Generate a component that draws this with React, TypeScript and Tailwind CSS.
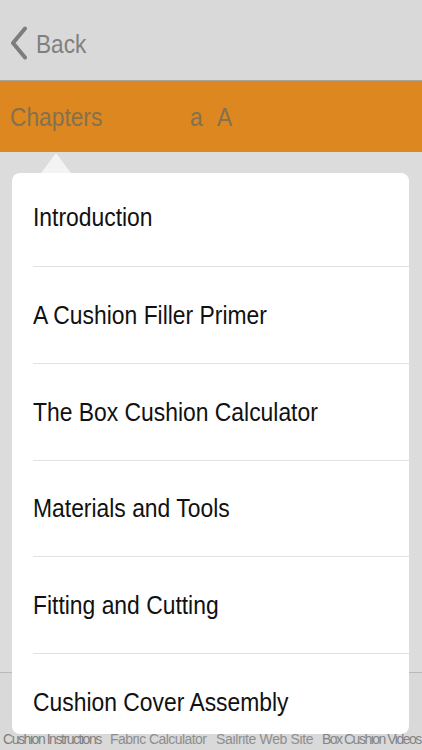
const chapters = [
  { title: "Introduction", row: "h-[94px] border-b pb-[5px]" },
  { title: "A Cushion Filler Primer", row: "h-[97px] border-b" },
  { title: "The Box Cushion Calculator", row: "h-[97px] border-b" },
  { title: "Materials and Tools", row: "h-[96px] border-b" },
  { title: "Fitting and Cutting", row: "h-[97px] border-b pt-[1px]" },
  { title: "Cushion Cover Assembly", row: "h-[97px] pb-[1px]" },
];

export default function App() {
  return (
    <div className="relative flex h-[750px] w-[422px] flex-col overflow-hidden bg-[#dcdcdc] font-['Liberation_Sans',Arial,sans-serif]">
      <header className="flex h-[81px] shrink-0 items-center gap-[9px] border-b border-[#a8a29a] bg-[#d9d9d9] pl-[10px]">
        <svg width="17" height="34" viewBox="0 0 17 34" fill="none" className="mt-[6px]">
          <path d="M15 2.5 L3 17 L15 31.5" stroke="#7d7d7d" strokeWidth="4" strokeLinecap="round" strokeLinejoin="round" />
        </svg>
        <span className="mt-[7px] inline-block origin-left scale-x-[0.87] text-[26px] leading-none text-[#808080]">Back</span>
      </header>

      <div className="flex h-[71px] shrink-0 items-center bg-[#dd8720] pl-[10px] text-[26px] leading-none text-[#83714f]">
        <span className="w-[180px] origin-left scale-x-[0.875]">Chapters</span>
        <span className="w-[27px] origin-left scale-x-[0.875]">a</span>
        <span className="origin-left scale-x-[0.875]">A</span>
      </div>

      <div className="flex-1 border-b border-[#b9b9b9]" />

      <div className="grid h-[77px] shrink-0 grid-cols-[98px_97px_97px_97px] items-end gap-x-[9px] bg-[#d9d9d9] pb-[1px] pl-[3px] text-[14px] leading-[20px] text-[#8e8e8e] whitespace-nowrap">
        <span className="tracking-[-1.45px] text-[#7f7f7f]">Cushion Instructions</span>
        <span className="tracking-[-0.55px]">Fabric Calculator</span>
        <span className="tracking-[-0.35px]">Sailrite Web Site</span>
        <span className="tracking-[-1.5px] text-[#858585]">Box Cushion Videos</span>
      </div>

      {/* popover over the dimmed page */}
      <div className="absolute left-[12px] top-[173px] h-[561px] w-[397px] rounded-[8px] bg-white pl-[21px]">
        <div className="absolute -top-[20px] left-[29px] h-0 w-0 border-x-[15px] border-b-[20px] border-x-transparent border-b-[#f3f3f3]" />
        {chapters.map((c) => (
          <div
            key={c.title}
            className={`flex items-center border-[#e2e2e6] text-[25px] leading-none text-[#111] ${c.row}`}
          >
            <span className="inline-block origin-left scale-x-[0.915] whitespace-nowrap">{c.title}</span>
          </div>
        ))}
      </div>
    </div>
  );
}
